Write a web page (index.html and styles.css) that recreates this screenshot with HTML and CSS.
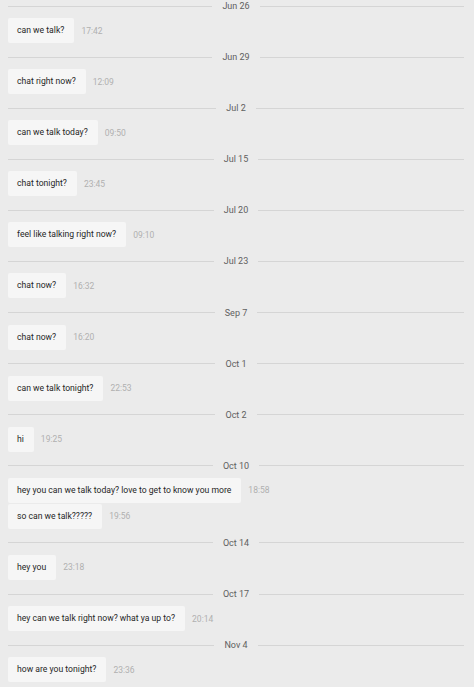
FILE: index.html
```
<!DOCTYPE html>
<html>
<head>
<meta charset="utf-8">
<link rel="stylesheet" href="styles.css">
</head>
<body>
<div class="chat">
  <div class="day"><span class="line"></span><span class="date">Jun 26</span><span class="line"></span></div>
  <div class="msgs"><div class="msg"><div class="bubble">can we talk?</div><span class="time">17:42</span></div></div>
  <div class="day"><span class="line"></span><span class="date">Jun 29</span><span class="line"></span></div>
  <div class="msgs"><div class="msg"><div class="bubble">chat right now?</div><span class="time">12:09</span></div></div>
  <div class="day"><span class="line"></span><span class="date">Jul 2</span><span class="line"></span></div>
  <div class="msgs"><div class="msg"><div class="bubble">can we talk today?</div><span class="time">09:50</span></div></div>
  <div class="day"><span class="line"></span><span class="date">Jul 15</span><span class="line"></span></div>
  <div class="msgs"><div class="msg"><div class="bubble">chat tonight?</div><span class="time">23:45</span></div></div>
  <div class="day"><span class="line"></span><span class="date">Jul 20</span><span class="line"></span></div>
  <div class="msgs"><div class="msg"><div class="bubble">feel like talking right now?</div><span class="time">09:10</span></div></div>
  <div class="day"><span class="line"></span><span class="date">Jul 23</span><span class="line"></span></div>
  <div class="msgs"><div class="msg"><div class="bubble">chat now?</div><span class="time">16:32</span></div></div>
  <div class="day"><span class="line"></span><span class="date">Sep 7</span><span class="line"></span></div>
  <div class="msgs"><div class="msg"><div class="bubble">chat now?</div><span class="time">16:20</span></div></div>
  <div class="day"><span class="line"></span><span class="date">Oct 1</span><span class="line"></span></div>
  <div class="msgs"><div class="msg"><div class="bubble">can we talk tonight?</div><span class="time">22:53</span></div></div>
  <div class="day"><span class="line"></span><span class="date">Oct 2</span><span class="line"></span></div>
  <div class="msgs"><div class="msg"><div class="bubble">hi</div><span class="time">19:25</span></div></div>
  <div class="day"><span class="line"></span><span class="date">Oct 10</span><span class="line"></span></div>
  <div class="msgs">
    <div class="msg"><div class="bubble">hey you can we talk today? love to get to know you more</div><span class="time">18:58</span></div>
    <div class="msg"><div class="bubble">so can we talk?????</div><span class="time">19:56</span></div>
  </div>
  <div class="day"><span class="line"></span><span class="date">Oct 14</span><span class="line"></span></div>
  <div class="msgs"><div class="msg"><div class="bubble">hey you</div><span class="time">23:18</span></div></div>
  <div class="day"><span class="line"></span><span class="date">Oct 17</span><span class="line"></span></div>
  <div class="msgs"><div class="msg"><div class="bubble">hey can we talk right now? what ya up to?</div><span class="time">20:14</span></div></div>
  <div class="day"><span class="line"></span><span class="date">Nov 4</span><span class="line"></span></div>
  <div class="msgs"><div class="msg"><div class="bubble">how are you tonight?</div><span class="time">23:36</span></div></div>
</div>
</body>
</html>
```
FILE: styles.css
```
html, body {
  margin: 0;
  padding: 0;
  background: #ebebeb;
  height: 100%;
  overflow: hidden;
}
body {
  font-family: Roboto, "Liberation Sans", sans-serif;
}
.chat {
  margin: 0 10px 0 8px;
  display: flex;
  flex-direction: column;
}
.day {
  display: flex;
  align-items: center;
  height: 12px;
  gap: 10px;
}
.line {
  flex: 1;
  height: 1px;
  background: #d5d5d5;
}
.date {
  font-size: 9px;
  color: #606060;
  line-height: 12px;
}
.msgs {
  display: flex;
  flex-direction: column;
  gap: 1px;
  padding: 6px 0 8.1px;
}
.msg {
  display: flex;
  align-items: center;
  gap: 7px;
}
.bubble {
  background: #f6f6f6;
  color: #262626;
  font-size: 8.65px;
  line-height: 25px;
  height: 25px;
  padding: 0 10px 0 9px;
  border-radius: 2px;
  white-space: nowrap;
}
.time {
  font-size: 8.5px;
  color: #b0b0b0;
}
```
